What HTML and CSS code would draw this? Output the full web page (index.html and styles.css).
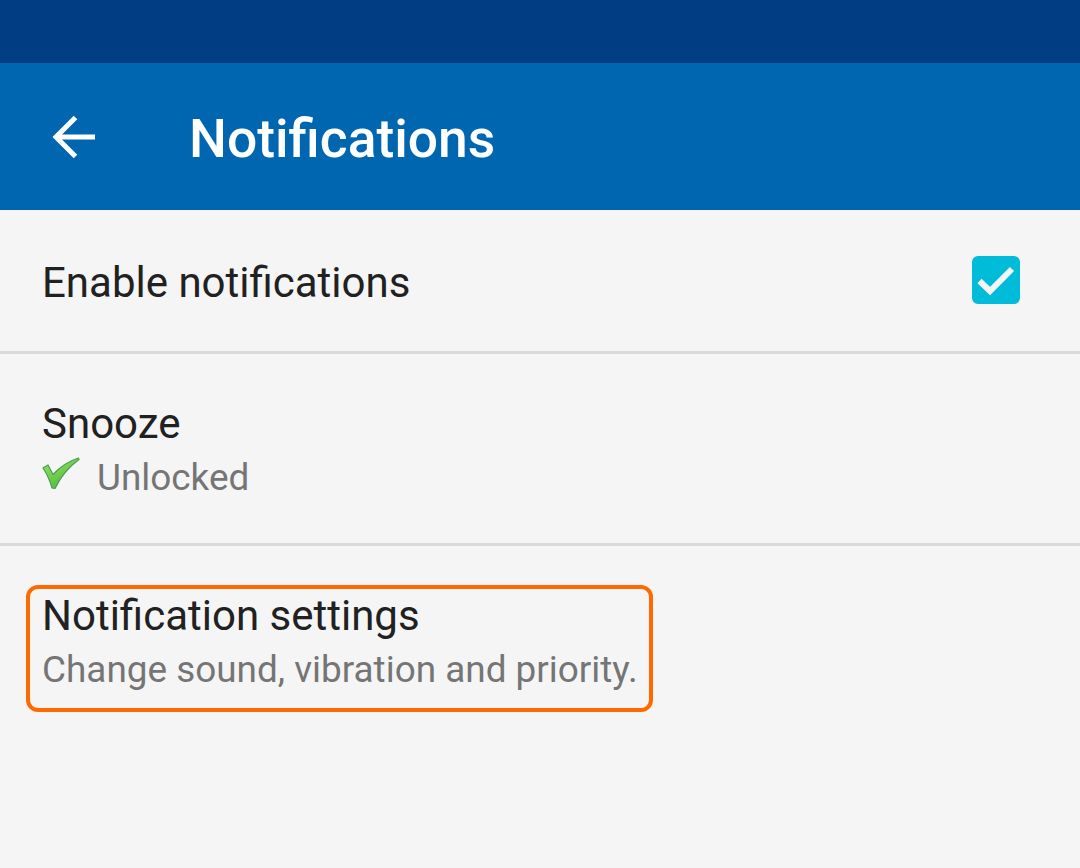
FILE: index.html
```html
<!DOCTYPE html>
<html lang="en">
<head>
<meta charset="utf-8">
<title>Notifications</title>
<link rel="stylesheet" href="styles.css">
</head>
<body>
<div class="screen">
  <div class="status-bar"></div>
  <header class="toolbar">
    <svg class="back" width="44" height="44" viewBox="0 0 44 44" aria-hidden="true">
      <path d="M43 22H4M23.500 2.500L4 22l19.500 19.500" fill="none" stroke="#fff" stroke-width="5"/>
    </svg>
    <h1 class="title">Notifications</h1>
  </header>
  <main class="list">
    <section class="row row-enable">
      <div class="row-title">Enable notifications</div>
      <svg class="checkbox" width="48" height="48" viewBox="0 0 48 48" aria-hidden="true">
        <rect width="48" height="48" rx="6" fill="#00bcd9"/>
        <path d="M7.500 25 18 35 40 13" fill="none" stroke="#f5f5f5" stroke-width="6"/>
      </svg>
    </section>
    <section class="row row-snooze">
      <div class="row-title">Snooze</div>
      <div class="row-sub">
        <svg class="tick" width="38" height="32" viewBox="0 0 38 32" aria-hidden="true">
          <defs>
            <linearGradient id="tickfill" x1="0" y1="0" x2="0.6" y2="1">
              <stop offset="0" stop-color="#9be85f"/>
              <stop offset="1" stop-color="#4fb83c"/>
            </linearGradient>
          </defs>
          <path d="M1 11 6 8 11 17.500C18 10 27 4 36.500 1L37 2.500C28 9 19 19 13 31.500L10 31C8 24 5 17 1 11Z" fill="url(#tickfill)" stroke="#4d9a5a" stroke-width="1.200" stroke-linejoin="round"/>
        </svg>
        <span>Unlocked</span>
      </div>
    </section>
    <section class="row row-settings">
      <div class="highlight"></div>
      <div class="row-title">Notification settings</div>
      <div class="row-sub">Change sound, vibration and priority.</div>
    </section>
  </main>
</div>
</body>
</html>
```

FILE: styles.css
```css
* { box-sizing: border-box; }
html, body { margin: 0; padding: 0; }
body { background: #f5f5f5; font-family: Roboto, "Liberation Sans", sans-serif; }
.screen { width: 1080px; height: 868px; overflow: hidden; display: flex; flex-direction: column; }
.status-bar { height: 63px; background: #003d82; flex: none; }
.toolbar { height: 147px; background: #0066b0; display: flex; align-items: center; padding-left: 52px; flex: none; }
.back { flex: none; margin-right: 93px; }
.title { margin: 4px 0 0; color: #fff; font-size: 53.400px; font-weight: 500; line-height: 60px; }
.list { flex: 1; }
.row { position: relative; padding-left: 42px; padding-right: 60px; }
.row-enable { height: 144px; border-bottom: 3px solid #d9d9d9; display: flex; align-items: center; justify-content: space-between; }
.row-enable .row-title { margin-top: 5px; }
.checkbox { margin-top: -2px; }
.row-snooze { height: 192px; border-bottom: 3px solid #d9d9d9; padding-top: 47px; }
.row-settings { padding-top: 47px; }
.row-title { color: #212121; font-size: 42px; line-height: 46px; }
.row-sub { color: #757575; font-size: 36.900px; line-height: 42px; margin-top: 10px; display: flex; align-items: center; }
.tick { flex: none; align-self: flex-start; margin-right: 17px; }
.highlight { position: absolute; left: 26px; top: 39px; width: 627px; height: 127px; border: 4px solid #ff6a00; border-radius: 12px; }
```
